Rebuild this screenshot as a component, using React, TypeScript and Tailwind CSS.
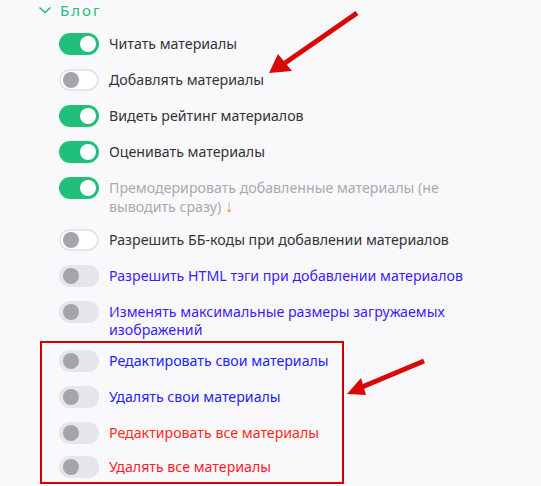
import React from "react";

type Row = {
  label: React.ReactNode;
  variant: "on" | "off" | "grey";
  color: string;
  extra?: string;
};

const rows: Row[] = [
  { label: "Читать материалы", variant: "on", color: "text-[#333338]" },
  { label: "Добавлять материалы", variant: "off", color: "text-[#333338]" },
  { label: "Видеть рейтинг материалов", variant: "on", color: "text-[#333338]" },
  { label: "Оценивать материалы", variant: "on", color: "text-[#333338]" },
  {
    label: (
      <>
        Премодерировать добавленные материалы (не
        <br />
        выводить сразу) <span className="text-[#f5891f] text-[16px] leading-[18px]">↓</span>
      </>
    ),
    variant: "on",
    color: "text-[#a9a9ae]",
  },
  { label: "Разрешить ББ-коды при добавлении материалов", variant: "off", color: "text-[#333338]", extra: "-mt-[1px]" },
  { label: "Разрешить HTML тэги при добавлении материалов", variant: "grey", color: "text-[#3a1cff]" },
  {
    label: (
      <>
        Изменять максимальные размеры загружаемых
        <br />
        изображений
      </>
    ),
    variant: "grey",
    color: "text-[#3a1cff]",
  },
  { label: "Редактировать свои материалы", variant: "grey", color: "text-[#2222ff]", extra: "-mt-[3px]" },
  { label: "Удалять свои материалы", variant: "grey", color: "text-[#2222ff]" },
  { label: "Редактировать все материалы", variant: "grey", color: "text-[#ff2a1a]" },
  { label: "Удалять все материалы", variant: "grey", color: "text-[#ff1a2a]", extra: "-mt-[2px]" },
];

function Toggle({ variant }: { variant: Row["variant"] }) {
  if (variant === "on") {
    return (
      <div className="w-[40px] h-[22px] rounded-full bg-[#21c07a] flex items-center justify-end pr-[3px] shrink-0">
        <div className="w-[16px] h-[16px] rounded-full bg-white" />
      </div>
    );
  }
  if (variant === "off") {
    return (
      <div className="w-[40px] h-[22px] rounded-full bg-white border-2 border-[#e6e6ea] flex items-center pl-[2px] shrink-0">
        <div className="w-[16px] h-[16px] rounded-full bg-[#a4a4a9]" />
      </div>
    );
  }
  return (
    <div className="w-[40px] h-[22px] rounded-full bg-[#e6e6ea] flex items-center pl-[4px] shrink-0">
      <div className="w-[16px] h-[16px] rounded-full bg-[#a4a4a9]" />
    </div>
  );
}

export default function App() {
  return (
    <div
      className="relative w-[541px] h-[486px] bg-[#f9f9fb] overflow-hidden"
      style={{ fontFamily: '"Noto Sans", "Open Sans", sans-serif' }}
    >
      <div className="flex items-center h-[20px] pl-[38px] gap-[8px]">
        <svg width="14" height="10" viewBox="0 0 14 10" fill="none">
          <path d="M1.5 2.5 L7 7.5 L12.5 2.5" stroke="#21c07a" strokeWidth="1.6" />
        </svg>
        <span className="text-[15px] leading-[20px] tracking-[2px] text-[#21c07a]">Блог</span>
      </div>
      <div className="flex flex-col gap-[14px] pl-[59px] pt-[13px]">
        {rows.map((r, i) => (
          <div key={i} className={`flex items-start gap-[10px] ${r.extra ?? ""}`}>
            <Toggle variant={r.variant} />
            <div className={`text-[14.2px] leading-[18px] pt-[2px] ${r.color}`}>{r.label}</div>
          </div>
        ))}
      </div>

      <div className="absolute left-[40px] top-[341px] w-[304px] h-[143px] border-2 border-[#d40000]" />

      <svg className="absolute left-0 top-0" width="541" height="486" viewBox="0 0 541 486">
        <line x1="357" y1="13" x2="285" y2="63" stroke="#d80808" strokeWidth="5" />
        <polygon points="269,73 278,54 292,71" fill="#d80808" />
        <line x1="424" y1="361" x2="362" y2="387" stroke="#d80808" strokeWidth="5" />
        <polygon points="347,394 361,378 366,395" fill="#d80808" />
      </svg>
    </div>
  );
}
